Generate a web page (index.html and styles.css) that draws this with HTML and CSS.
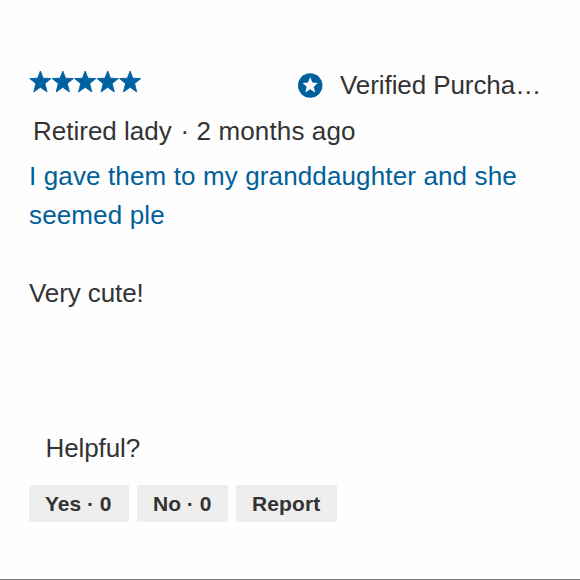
FILE: index.html
```html
<!DOCTYPE html>
<html lang="en">
<head>
<meta charset="utf-8">
<title>Review</title>
<link rel="stylesheet" href="styles.css">
</head>
<body>
<article class="review">
  <header class="top">
    <svg class="stars" width="114" height="24" viewBox="0 0 114 24" role="img">
      <defs><path id="star" d="M0-11 2.7-3.8 10.6-3.4 4.5 1.5 6.6 9.9 0 5.3-6.6 9.9-4.5 1.5-10.6-3.4-2.7-3.8Z"/></defs>
      <use href="#star" x="11.4" y="12"/><use href="#star" x="33.8" y="12"/><use href="#star" x="56.2" y="12"/><use href="#star" x="78.7" y="12"/><use href="#star" x="101.1" y="12"/>
    </svg>
    <div class="verified">
      <svg class="badge" width="25" height="25" viewBox="0 0 25 25"><circle cx="12.2" cy="12.5" r="12.2"/><path d="M12.2 4.3 14.4 9.6 19.8 10 15.7 13.7 17.2 19.4 12.2 16.3 7.2 19.4 8.7 13.7 4.6 10 10 9.6Z"/></svg>
      <span class="verified-text">Verified Purcha…</span>
    </div>
  </header>
  <p class="author"><span class="name">Retired lady</span> <span class="date">· 2 months ago</span></p>
  <h3 class="title">I gave them to my granddaughter and she<br>seemed ple</h3>
  <p class="body">Very cute!</p>
  <p class="helpful">Helpful?</p>
  <div class="actions"><button class="yes">Yes · 0</button><button class="no">No · 0</button><button class="report">Report</button></div>
</article>
<div class="rule"></div>
</body>
</html>
```
FILE: styles.css
```css
* { box-sizing: border-box; }
body { margin: 0; height: 580px; background: #fefefe; color: #333; font: 26px/39px "Liberation Sans", Arial, sans-serif; display: flex; flex-direction: column; overflow: hidden; }
p, h3 { margin: 0; font-weight: 400; white-space: nowrap; }
.review { padding: 66px 29px 0; flex: 1; }
.top { display: flex; height: 39px; }
.stars { margin-top: 4px; fill: #0061a0; stroke: #0061a0; stroke-width: 0.9; stroke-linejoin: round; flex: none; }
.verified { display: flex; margin-left: 155px; }
.badge { margin-top: 7px; fill: #00609c; flex: none; }
.badge path { fill: #fff; }
.verified-text { margin-left: 17px; white-space: nowrap; letter-spacing: -0.08px; }
.author { margin: 7px 0 0 4px; }
.date { margin-left: 1.5px; letter-spacing: 0.12px; }
.title { margin-top: 6px; font-size: 26px; color: #00609a; letter-spacing: 0.13px; }
.body { margin-top: 39px; letter-spacing: -0.1px; }
.helpful { margin: 116px 0 0 16.5px; letter-spacing: -0.1px; }
.actions { display: flex; gap: 8px; margin-top: 17px; }
button { height: 37px; padding: 0 0 0 16px; border: 0; background: #eee; color: #333; font: bold 21px/37px "Liberation Sans", Arial, sans-serif; text-align: left; white-space: nowrap; }
.yes { width: 100px; }
.no { width: 91px; }
.report { width: 101px; letter-spacing: 0.1px; }
.rule { height: 1px; background: #777; }
```
